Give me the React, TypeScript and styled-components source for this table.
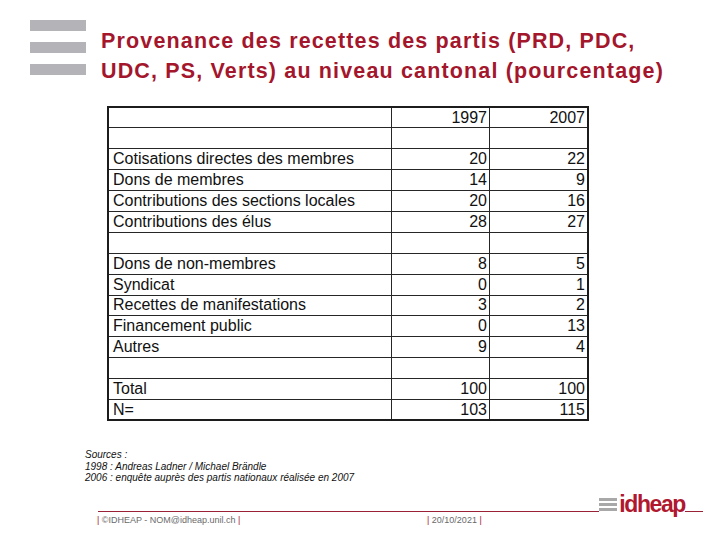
import React from 'react'
import styled, { createGlobalStyle } from 'styled-components'

const GlobalStyle = createGlobalStyle`
  html, body {
    margin: 0;
    padding: 0;
    background: #ffffff;
  }
  body {
    font-family: "Liberation Sans", Arial, sans-serif;
  }
`

const Slide = styled.div`
  width: 720px;
  height: 540px;
  overflow: hidden;
  display: flex;
  flex-direction: column;
  background: #ffffff;
`

const Header = styled.header`
  display: flex;
  align-items: flex-start;
  padding: 20px 0 0 30px;
`

const BarStack = styled.div`
  display: flex;
  flex-direction: column;
  gap: 11px;
  width: 56px;
`

const Bar = styled.span`
  display: block;
  height: 11px;
  background: #b4b4b8;
`

const Title = styled.h1`
  margin: 6px 0 0 15px;
  font-size: 21.5px;
  line-height: 30px;
  font-weight: 700;
  letter-spacing: 1.15px;
  color: #a3162c;
`

const Table = styled.table`
  margin: 20px 0 0 107px;
  width: 482px;
  border-collapse: collapse;
  border: 2px solid #1c1c1c;
  font-size: 16px;
  color: #111111;
`

const Row = styled.tr`
  height: 20.9px;
`

const Cell = styled.td<{ $num?: boolean }>`
  border: 1px solid #262626;
  padding: 0 ${p => (p.$num ? '2px' : '4px')};
  width: ${p => (p.$num ? '93px' : 'auto')};
  text-align: ${p => (p.$num ? 'right' : 'left')};
  line-height: 18px;
  white-space: nowrap;
`

const Sources = styled.div`
  margin: 28px 0 0 85px;
  font-size: 10px;
  line-height: 11.5px;
  font-style: italic;
  color: #111111;
`

const Footer = styled.footer`
  display: flex;
  align-items: flex-start;
  margin-top: 11px;
  padding: 0 17px 0 98px;
`

const FooterMain = styled.div`
  flex: 1;
  display: flex;
  flex-direction: column;
`

const Rule = styled.div<{ $width?: number }>`
  height: 1px;
  margin-top: 16px;
  background: #9a2236;
  width: ${p => (p.$width ? `${p.$width}px` : 'auto')};
`

const FooterTexts = styled.div`
  display: flex;
  margin-top: 3px;
  font-size: 9px;
  line-height: 10px;
  color: #6a6a6a;
`

const FooterItem = styled.span<{ $width?: number }>`
  width: ${p => (p.$width ? `${p.$width}px` : 'auto')};
  margin-left: -1px;
`

const Pipe = styled.span`
  color: #a3162c;
`

const Logo = styled.div`
  display: flex;
  align-items: flex-start;
  height: 24px;
`

const LogoText = styled.span`
  font-size: 23px;
  line-height: 24px;
  font-weight: 700;
  letter-spacing: -1.4px;
  color: #b0182f;
  margin-top: -3px;
`

const rows: [string, string, string][] = [
  ['', '1997', '2007'],
  ['', '', ''],
  ['Cotisations directes des membres', '20', '22'],
  ['Dons de membres', '14', '9'],
  ['Contributions des sections locales', '20', '16'],
  ['Contributions des élus', '28', '27'],
  ['', '', ''],
  ['Dons de non-membres', '8', '5'],
  ['Syndicat', '0', '1'],
  ['Recettes de manifestations', '3', '2'],
  ['Financement public', '0', '13'],
  ['Autres', '9', '4'],
  ['', '', ''],
  ['Total', '100', '100'],
  ['N=', '103', '115'],
]

const LogoMark = () => (
  <svg width="20" height="24" viewBox="0 0 20 24">
    <rect x="0" y="3" width="18" height="3" fill="#a8a8a8" />
    <rect x="0" y="8" width="18" height="3" fill="#a8a8a8" />
    <rect x="0" y="13" width="18" height="3" fill="#a8a8a8" />
  </svg>
)

const App: React.FC = () => {
  return (
    <>
      <GlobalStyle />
      <Slide>
        <Header>
          <BarStack>
            <Bar />
            <Bar />
            <Bar />
          </BarStack>
          <Title>
            Provenance des recettes des partis (PRD, PDC,
            <br />
            UDC, PS, Verts) au niveau cantonal (pourcentage)
          </Title>
        </Header>

        <Table>
          <tbody>
            {rows.map((r, i) => (
              <Row key={i}>
                <Cell>{r[0]}</Cell>
                <Cell $num>{r[1]}</Cell>
                <Cell $num>{r[2]}</Cell>
              </Row>
            ))}
          </tbody>
        </Table>

        <Sources>
          <div>Sources :</div>
          <div>1998 : Andreas Ladner / Michael Brändle</div>
          <div>2006 : enquête auprès des partis nationaux réalisée en 2007</div>
        </Sources>

        <Footer>
          <FooterMain>
            <Rule />
            <FooterTexts>
              <FooterItem $width={331}>
                <Pipe>|</Pipe> ©IDHEAP - NOM@idheap.unil.ch <Pipe>|</Pipe>
              </FooterItem>
              <FooterItem>
                <Pipe>|</Pipe> 20/10/2021 <Pipe>|</Pipe>
              </FooterItem>
            </FooterTexts>
          </FooterMain>
          <Logo>
            <LogoMark />
            <LogoText>idheap</LogoText>
          </Logo>
          <Rule $width={18} />
        </Footer>
      </Slide>
    </>
  )
}

export default App
